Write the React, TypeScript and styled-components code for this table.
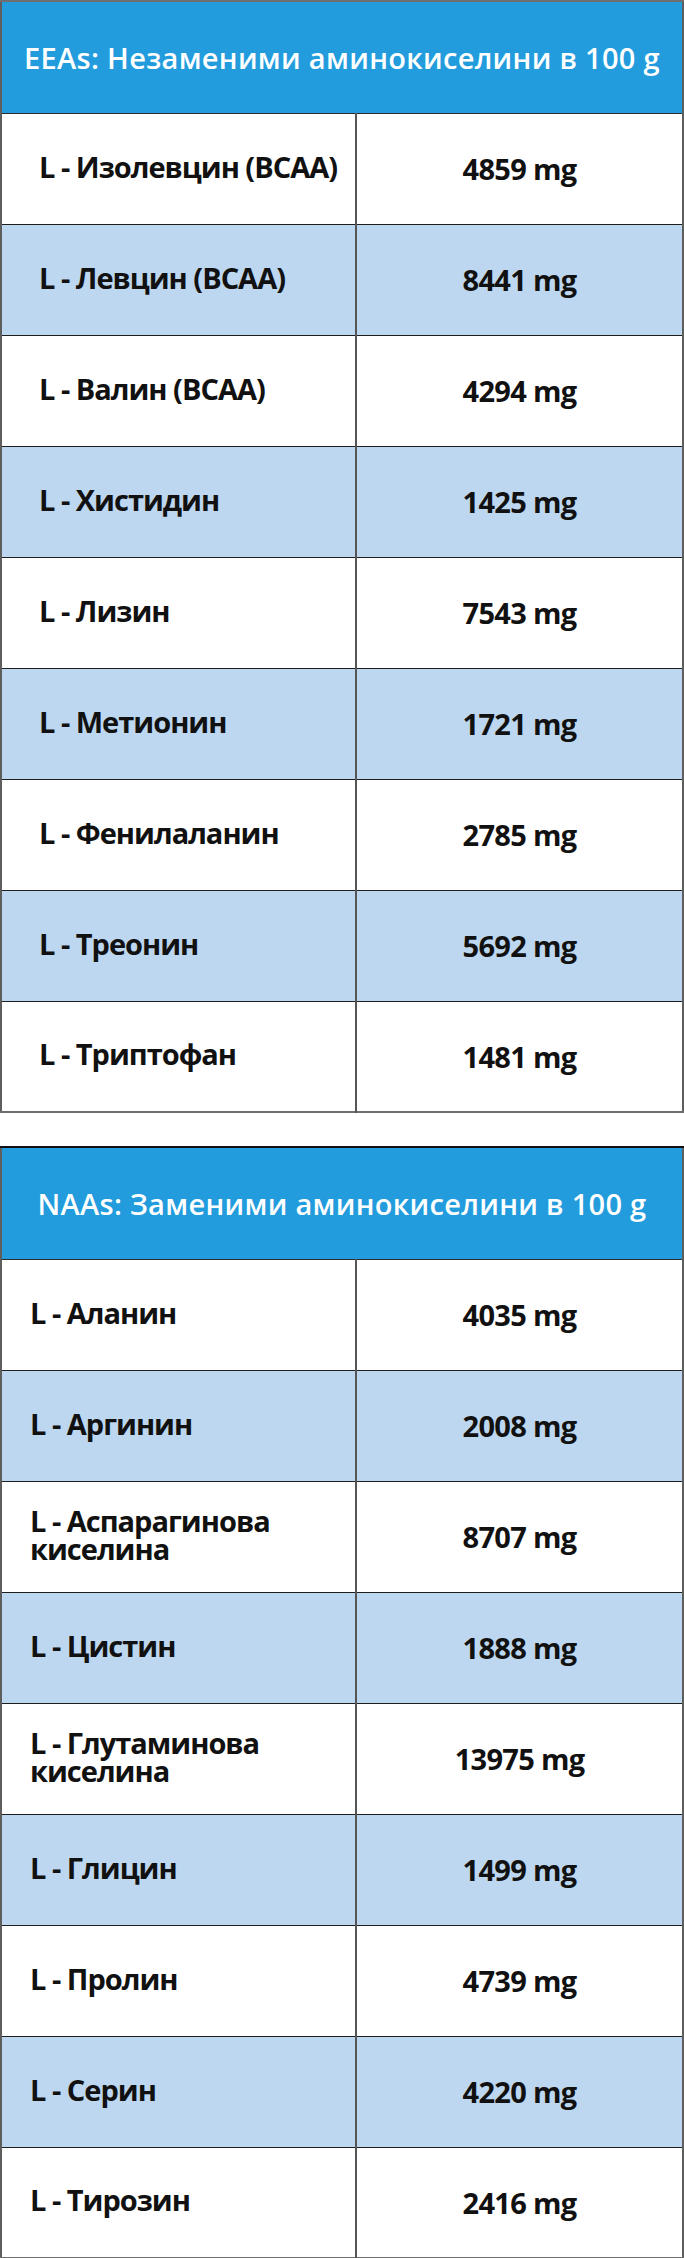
import React from 'react'
import styled, { createGlobalStyle } from 'styled-components'

const GlobalStyle = createGlobalStyle`
  * {
    margin: 0;
    padding: 0;
    box-sizing: border-box;
  }

  body {
    font-family: 'Open Sans', 'Liberation Sans', sans-serif;
    background: #ffffff;
    color: #111111;
  }
`;

const Page = styled.div`
  width: 684px;
  display: flex;
  flex-direction: column;
  gap: 33px;
`;

const Table = styled.table`
  width: 684px;
  border-collapse: collapse;
  table-layout: fixed;
  border-left: 2px solid #5e5e5e;
  border-right: 2px solid #5e5e5e;
`;

const NameCol = styled.col`
  width: 355px;
`;

const HeaderCell = styled.th<{ $topColor: string }>`
  height: 112px;
  padding: 0;
  background: #229cdd;
  color: #ffffff;
  font-size: 29px;
  font-weight: 600;
  text-align: center;
  white-space: nowrap;
  letter-spacing: 0.3px;
  border-top: 2px solid ${props => props.$topColor};
  border-bottom: 1px solid #2b2b2b;
`;

const Row = styled.tr<{ $alt: boolean }>`
  height: 111px;
  background: ${props => (props.$alt ? '#bdd7f0' : '#ffffff')};
  border-bottom: 1px solid #1e1e1e;

  &:last-child {
    border-bottom: 2px solid #6e6e6e;
  }
`;

const NameCell = styled.td<{ $indent: number }>`
  padding: 0 4px 4px ${props => props.$indent}px;
  font-size: 29px;
  font-weight: 700;
  line-height: 28px;
  letter-spacing: -1px;
  text-align: left;
  vertical-align: middle;
  border-right: 2px solid #555555;
`;

const ValueCell = styled.td`
  font-size: 29px;
  font-weight: 700;
  letter-spacing: -0.7px;
  text-align: center;
  vertical-align: middle;
`;

type Amino = { name: string; amount: string };

const essential: Amino[] = [
  { name: 'L - Изолевцин (BCAA)', amount: '4859 mg' },
  { name: 'L - Левцин (BCAA)', amount: '8441 mg' },
  { name: 'L - Валин (BCAA)', amount: '4294 mg' },
  { name: 'L - Хистидин', amount: '1425 mg' },
  { name: 'L - Лизин', amount: '7543 mg' },
  { name: 'L - Метионин', amount: '1721 mg' },
  { name: 'L - Фенилаланин', amount: '2785 mg' },
  { name: 'L - Треонин', amount: '5692 mg' },
  { name: 'L - Триптофан', amount: '1481 mg' },
];

const nonEssential: Amino[] = [
  { name: 'L - Аланин', amount: '4035 mg' },
  { name: 'L - Аргинин', amount: '2008 mg' },
  { name: 'L - Аспарагинова киселина', amount: '8707 mg' },
  { name: 'L - Цистин', amount: '1888 mg' },
  { name: 'L - Глутаминова киселина', amount: '13975 mg' },
  { name: 'L - Глицин', amount: '1499 mg' },
  { name: 'L - Пролин', amount: '4739 mg' },
  { name: 'L - Серин', amount: '4220 mg' },
  { name: 'L - Тирозин', amount: '2416 mg' },
];

const AminoTable: React.FC<{
  title: string
  items: Amino[]
  indent: number
  topColor: string
}> = ({ title, items, indent, topColor }) => (
  <Table>
    <colgroup>
      <NameCol />
      <col />
    </colgroup>
    <thead>
      <tr>
        <HeaderCell colSpan={2} $topColor={topColor}>{title}</HeaderCell>
      </tr>
    </thead>
    <tbody>
      {items.map((item, index) => (
        <Row key={item.name} $alt={index % 2 === 1}>
          <NameCell $indent={indent}>{item.name}</NameCell>
          <ValueCell>{item.amount}</ValueCell>
        </Row>
      ))}
    </tbody>
  </Table>
)

function App() {
  return (
    <>
      <GlobalStyle />
      <Page>
        <AminoTable
          title="EEAs: Незаменими аминокиселини в 100 g"
          items={essential}
          indent={37}
          topColor="#6e6e6e"
        />
        <AminoTable
          title="NAAs: Заменими аминокиселини в 100 g"
          items={nonEssential}
          indent={28}
          topColor="#111111"
        />
      </Page>
    </>
  )
}

export default App
